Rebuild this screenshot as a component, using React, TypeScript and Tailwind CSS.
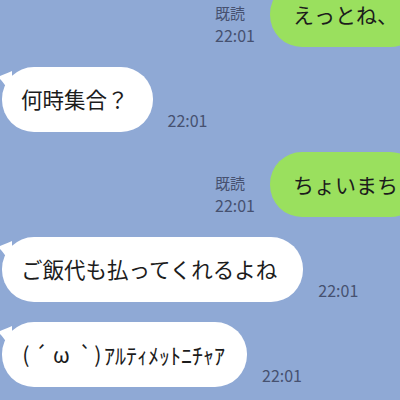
const jp = "font-['Noto_Sans_CJK_JP','Noto_Sans',sans-serif]";

function Sent({ text, top }: { text: string; top?: boolean }) {
  return (
    <div className={`flex items-end gap-[15px] pl-[215px] ${top ? "-mt-[18px]" : ""}`}>
      <div className="flex shrink-0 flex-col items-start text-[16px] leading-[23px] text-[#465170]">
        <span className="text-[15px]">既読</span>
        <span>22:01</span>
      </div>
      <div className="flex h-[65px] shrink-0 items-center whitespace-nowrap rounded-[32px] bg-[#9ae05e] pl-[23px] pr-[24px] text-[21px] text-[#1c1c1c]">
        {text}
      </div>
    </div>
  );
}

function Bubble({ children, pr }: { children: React.ReactNode; pr: string }) {
  return (
    <div
      className={`relative ml-[2px] flex h-[65px] shrink-0 items-center whitespace-nowrap rounded-[32px] bg-white pl-[19px] ${pr} text-[21.5px] text-[#1c1c1c]`}
    >
      <svg
        className="absolute -left-[4px] top-[4px]"
        width="14"
        height="16"
        viewBox="0 0 14 16"
      >
        <path d="M14 0 C10 2 4 4 0 6 C3 9 6 12 8 16 L14 16 Z" fill="#ffffff" />
      </svg>
      {children}
    </div>
  );
}

function Time() {
  return (
    <span className="mb-[1px] shrink-0 text-[16px] leading-[22px] text-[#465170]">
      22:01
    </span>
  );
}

export default function App() {
  return (
    <div
      className={`flex h-[400px] w-[400px] flex-col gap-[20px] overflow-hidden bg-[#8fa9d5] ${jp}`}
    >
      <Sent text="えっとね、" top />
      <div className="flex items-end gap-[15px]">
        <Bubble pr="pr-[24px]">何時集合？</Bubble>
        <Time />
      </div>
      <Sent text="ちょいまち" />
      <div className="flex items-end gap-[15px]">
        <Bubble pr="pr-[26px]">ご飯代も払ってくれるよね</Bubble>
        <Time />
      </div>
      <div className="flex items-end gap-[15px]">
        <Bubble pr="pr-[22px]">
          <span className="relative flex items-center">
            <span className="w-[10px] text-center">(</span>
            <span className="ml-[3px] w-[10px] text-center">´</span>
            <span className="ml-[9px] w-[14px] text-center">ω</span>
            <span className="ml-[12px] w-[10px] text-center">`</span>
            <span className="ml-[4px] w-[10px] text-center">)</span>
            <span className="ml-[1px] text-[22px]">ｱﾙﾃｨﾒｯﾄﾆﾁｬｱ</span>
          </span>
        </Bubble>
        <Time />
      </div>
    </div>
  );
}
